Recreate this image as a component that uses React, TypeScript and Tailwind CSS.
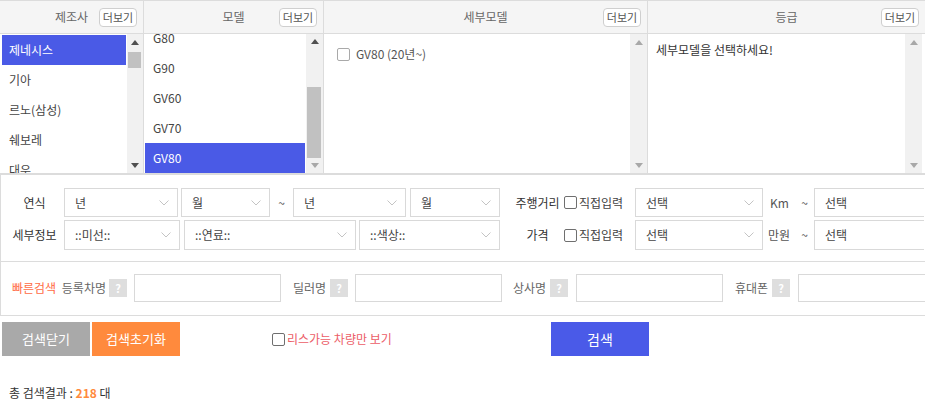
import React from 'react';

const makers = ['제네시스', '기아', '르노(삼성)', '쉐보레', '대우'];
const models = ['G80', 'G90', 'GV60', 'GV70', 'GV80'];

function Triangle({ up, dark }: { up?: boolean; dark?: boolean }) {
  return (
    <svg width="8" height="5" viewBox="0 0 8 5">
      <polygon
        points={up ? '0,5 8,5 4,0' : '0,0 8,0 4,5'}
        fill={dark ? '#505050' : '#a8a8a8'}
      />
    </svg>
  );
}

function ScrollBar({
  thumbTop = 0,
  thumbHeight = 0,
  upDark,
  downDark,
  narrow,
}: {
  thumbTop?: number;
  thumbHeight?: number;
  upDark?: boolean;
  downDark?: boolean;
  narrow?: boolean;
}) {
  return (
    <div
      className={`${narrow ? 'w-[16px]' : 'w-[17px]'} shrink-0 h-full bg-[#f1f1f1] flex flex-col`}
    >
      <div className="h-[16px] flex items-center justify-center">
        <Triangle up dark={upDark} />
      </div>
      <div className="flex-1 pl-[1px] pr-[2px]">
        {thumbHeight > 0 && (
          <div
            className="bg-[#c1c1c1]"
            style={{ marginTop: thumbTop, height: thumbHeight }}
          />
        )}
      </div>
      <div className="h-[16px] flex items-center justify-center">
        <Triangle dark={downDark} />
      </div>
    </div>
  );
}

function MoreButton() {
  return (
    <button className="w-[38px] h-[19px] border border-[#cfcfcf] rounded-[4px] bg-white text-[11px] leading-none text-[#555]">
      더보기
    </button>
  );
}

function ColumnHeader({ title }: { title: string }) {
  return (
    <div className="h-[33px] shrink-0 bg-[#f5f5f5] border-b border-[#dcdcdc] grid grid-cols-[38px_minmax(0,1fr)_38px] items-center px-[6px]">
      <div />
      <div className="text-center text-[12px] text-[#666] whitespace-nowrap">{title}</div>
      <MoreButton />
    </div>
  );
}

function Chevron() {
  return (
    <svg width="10" height="6" viewBox="0 0 10 6" className="shrink-0">
      <polyline points="0.5,0.5 5,5 9.5,0.5" fill="none" stroke="#c4c4c4" strokeWidth="1" />
    </svg>
  );
}

function Select({ w, label, open }: { w: string; label: string; open?: boolean }) {
  return (
    <div
      className={`${w} shrink-0 h-full border ${
        open ? 'border-r-0' : ''
      } border-[#d9d9d9] bg-white flex items-center justify-between pl-[10px] pr-[8px] text-[12px] text-[#444]`}
    >
      <span>{label}</span>
      {!open && <Chevron />}
    </div>
  );
}

function Check({ light }: { light?: boolean }) {
  return (
    <span
      className={`inline-block shrink-0 w-[13px] h-[13px] rounded-[2px] bg-white border ${
        light ? 'border-[#a9a9a9]' : 'border-[#6f6f6f]'
      }`}
    />
  );
}

function Help() {
  return (
    <span className="w-[18px] h-[18px] shrink-0 bg-[#dedede] text-white text-[11px] font-bold flex items-center justify-center leading-none">
      ?
    </span>
  );
}

function RangeRight({ label, unit, unitPad }: { label: string; unit: string; unitPad: string }) {
  return (
    <>
      <div className="ml-[15px] w-[45px] shrink-0 text-center text-[12px] text-[#333]">{label}</div>
      <div className="w-[75px] shrink-0 flex items-center pl-[4px] gap-[2px] text-[12px] text-[#444]">
        <Check />
        <span>직접입력</span>
      </div>
      <Select w="w-[128px]" label="선택" />
      <div className="w-[51px] shrink-0 flex items-center text-[12px] text-[#555]">
        <span className={`w-[32px] text-center ${unitPad}`}>{unit}</span>
        <span className="w-[19px] text-center">~</span>
      </div>
      <Select w="w-[110px]" label="선택" open />
    </>
  );
}

export default function App() {
  return (
    <div className="w-[925px] h-[406px] overflow-hidden bg-white font-['Noto_Sans_CJK_KR',sans-serif] text-[#333]">
      {/* 제조사 / 모델 / 세부모델 / 등급 */}
      <div className="flex border-t border-b-2 border-[#dcdcdc]">
        <div className="w-[144px] shrink-0 flex flex-col border-r border-[#dcdcdc]">
          <ColumnHeader title="제조사" />
          <div className="h-[139px] flex">
            <div className="flex-1 overflow-hidden pt-[1px] pl-[2px] pr-[1px]">
              {makers.map((m, i) => (
                <div
                  key={m}
                  className={`h-[30px] shrink-0 flex items-center pl-[7px] text-[12px] ${
                    i === 0 ? 'bg-[#4a5ae6] text-white' : 'text-[#444]'
                  }`}
                >
                  {m}
                </div>
              ))}
            </div>
            <ScrollBar narrow thumbTop={2} thumbHeight={16} upDark downDark />
          </div>
        </div>

        <div className="w-[180px] shrink-0 flex flex-col border-r border-[#dcdcdc]">
          <ColumnHeader title="모델" />
          <div className="h-[139px] flex">
            <div className="flex-1 overflow-hidden pl-[1px] pr-[1px]">
              <div className="mt-[-11px]">
                {models.map((m) => (
                  <div
                    key={m}
                    className={`h-[30px] flex items-center pl-[8px] text-[12px] ${
                      m === 'GV80' ? 'bg-[#4a5ae6] text-white' : 'text-[#444]'
                    }`}
                  >
                    {m}
                  </div>
                ))}
              </div>
            </div>
            <ScrollBar thumbTop={37} thumbHeight={71} upDark />
          </div>
        </div>

        <div className="w-[324px] shrink-0 flex flex-col border-r border-[#dcdcdc]">
          <ColumnHeader title="세부모델" />
          <div className="h-[139px] flex">
            <div className="flex-1 pt-[11px] pl-[13px]">
              <div className="flex items-center gap-[6px] text-[12px] text-[#555]">
                <Check light />
                <span>GV80 (20년~)</span>
              </div>
            </div>
            <ScrollBar />
          </div>
        </div>

        <div className="flex-1 flex flex-col">
          <ColumnHeader title="등급" />
          <div className="h-[139px] flex pr-[3px]">
            <div className="flex-1 pt-[7px] pl-[8px] text-[12px] text-[#333]">
              세부모델을 선택하세요!
            </div>
            <ScrollBar />
          </div>
        </div>
      </div>

      {/* 연식 / 세부정보 / 주행거리 / 가격 */}
      <div className="border-l border-b border-[#dcdcdc] pt-[13px] pb-[11px] flex flex-col gap-[3px]">
        <div className="h-[29px] flex items-center">
          <div className="w-[63px] shrink-0 pl-[4px] text-center text-[12px] text-[#333]">연식</div>
          <Select w="w-[114px]" label="년" />
          <div className="w-[3px] shrink-0" />
          <Select w="w-[89px]" label="월" />
          <div className="w-[23px] shrink-0 text-center text-[12px] text-[#555]">~</div>
          <Select w="w-[113px]" label="년" />
          <div className="w-[4px] shrink-0" />
          <Select w="w-[90px]" label="월" />
          <RangeRight label="주행거리" unit="Km" unitPad="pl-[1px]" />
        </div>
        <div className="h-[30px] flex items-center">
          <div className="w-[63px] shrink-0 pl-[4px] text-center text-[12px] text-[#333]">세부정보</div>
          <Select w="w-[116px]" label="::미선::" />
          <div className="w-[4px] shrink-0" />
          <Select w="w-[172px]" label="::연료::" />
          <div className="w-[3px] shrink-0" />
          <Select w="w-[141px]" label="::색상::" />
          <RangeRight label="가격" unit="만원" unitPad="" />
        </div>
      </div>

      {/* 빠른검색 */}
      <div className="border-l border-b border-[#dcdcdc] pt-[12px] pb-[13px] flex items-center text-[12px] text-[#666]">
        <div className="w-[133px] shrink-0 flex items-center pl-[11px] pr-[7px]">
          <span className="text-[#ff6b45]">빠른검색</span>
          <span className="ml-auto">등록차명</span>
          <span className="ml-[3px]">
            <Help />
          </span>
        </div>
        <div className="w-[147px] h-[28px] shrink-0 border border-[#d9d9d9]" />
        <div className="w-[74px] shrink-0 flex items-center justify-end gap-[4px] pr-[7px]">
          <span>딜러명</span>
          <Help />
        </div>
        <div className="w-[147px] h-[28px] shrink-0 border border-[#d9d9d9]" />
        <div className="w-[74px] shrink-0 flex items-center justify-end gap-[4px] pr-[8px]">
          <span>상사명</span>
          <Help />
        </div>
        <div className="w-[147px] h-[28px] shrink-0 border border-[#d9d9d9]" />
        <div className="w-[75px] shrink-0 flex items-center justify-end gap-[4px] pr-[8px]">
          <span>휴대폰</span>
          <Help />
        </div>
        <div className="w-[127px] h-[28px] shrink-0 border border-r-0 border-[#d9d9d9]" />
      </div>

      {/* 버튼 */}
      <div className="pt-[6px] pl-[2px] flex items-center">
        <button className="w-[88px] h-[34px] bg-[#a9a9a9] text-white text-[13px]">검색닫기</button>
        <button className="ml-[2px] w-[88px] h-[34px] bg-[#ff8a3d] text-white text-[13px]">검색초기화</button>
        <label className="ml-[92px] flex items-center gap-[2px] text-[12px] text-[#ec5d67]">
          <Check />
          <span>리스가능 차량만 보기</span>
        </label>
        <button className="ml-auto mr-[276px] w-[98px] h-[34px] bg-[#4a5ae8] text-white text-[14px]">검색</button>
      </div>

      <div className="mt-[29px] pl-[9px] text-[12px] leading-[16px] text-[#333]">
        총 검색결과 : <span className="font-bold text-[#ff8a3d]">218</span> 대
      </div>
    </div>
  );
}
